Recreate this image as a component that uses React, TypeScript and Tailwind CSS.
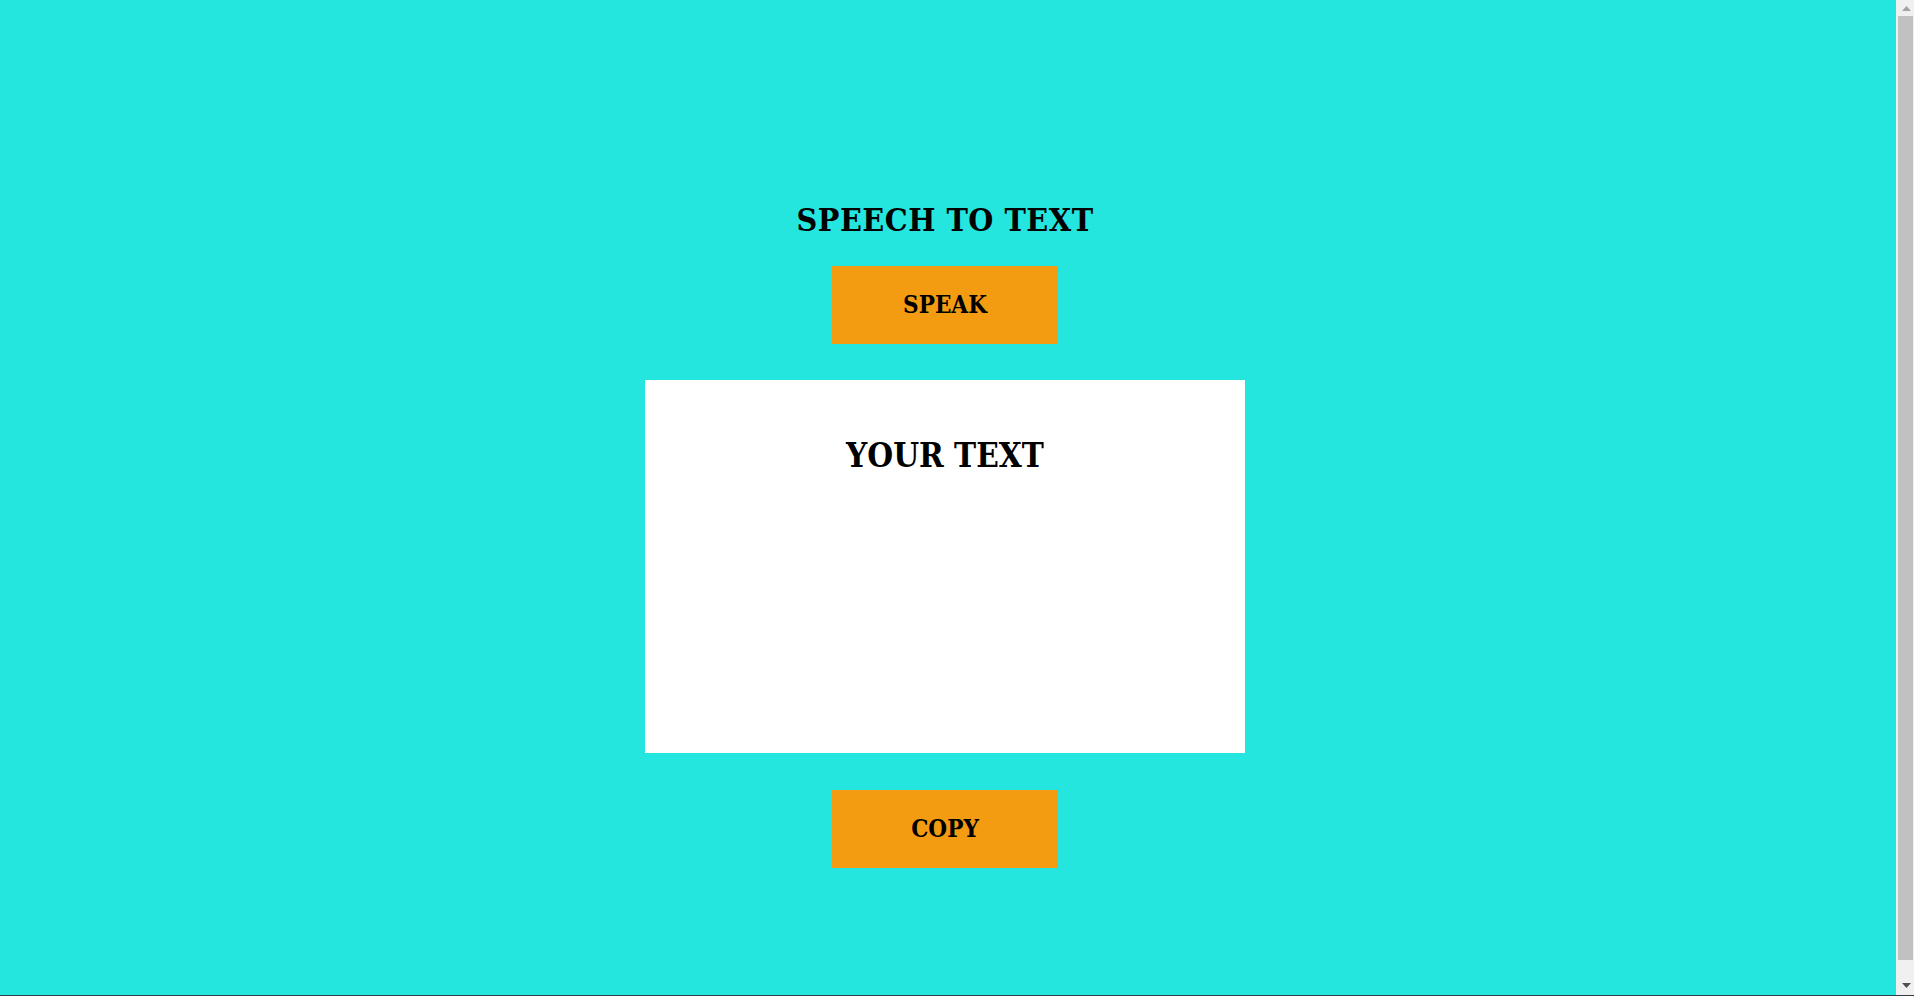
const ScrollBar = () => {
  return (
    <div className="w-[18px] h-full bg-[#f0f0f0] flex flex-col">
      <div className="h-[16px] flex items-center justify-center pl-[2px]">
        <svg width="9" height="5" viewBox="0 0 9 5">
          <path d="M4.5 0 L9 5 L0 5 Z" fill="#a3a3a3" />
        </svg>
      </div>
      <div className="ml-[2px] w-[15px] h-[944px] bg-[#c1c1c1]" />
      <div className="flex-1 flex items-center justify-center pl-[2px] pt-[16px]">
        <svg width="9" height="5" viewBox="0 0 9 5">
          <path d="M0 0 L9 0 L4.5 5 Z" fill="#505050" />
        </svg>
      </div>
    </div>
  );
};

export default function App() {
  return (
    <div className="h-screen flex bg-[#24e6df] border-b border-[#2f3b44] overflow-hidden">
      <main className="flex-1 flex flex-col items-center pt-[200px] pr-[6px] font-['DejaVu_Serif',serif] text-black">
        <h1 className="text-[32px] leading-[40px] font-bold [font-stretch:condensed] tracking-[0.5px]">
          SPEECH TO TEXT
        </h1>
        <button className="mt-[26px] w-[226px] h-[78px] bg-[#f39c12] text-[24px] font-bold [font-stretch:condensed]">
          SPEAK
        </button>
        <div className="mt-[36px] w-[600px] h-[373px] bg-white flex justify-center pt-[56px]">
          <p className="text-[33px] leading-[40px] h-[40px] font-bold [font-stretch:condensed]">YOUR TEXT</p>
        </div>
        <button className="mt-[37px] w-[226px] h-[78px] bg-[#f39c12] text-[24px] font-bold [font-stretch:condensed]">
          COPY
        </button>
      </main>
      <ScrollBar />
    </div>
  );
}
